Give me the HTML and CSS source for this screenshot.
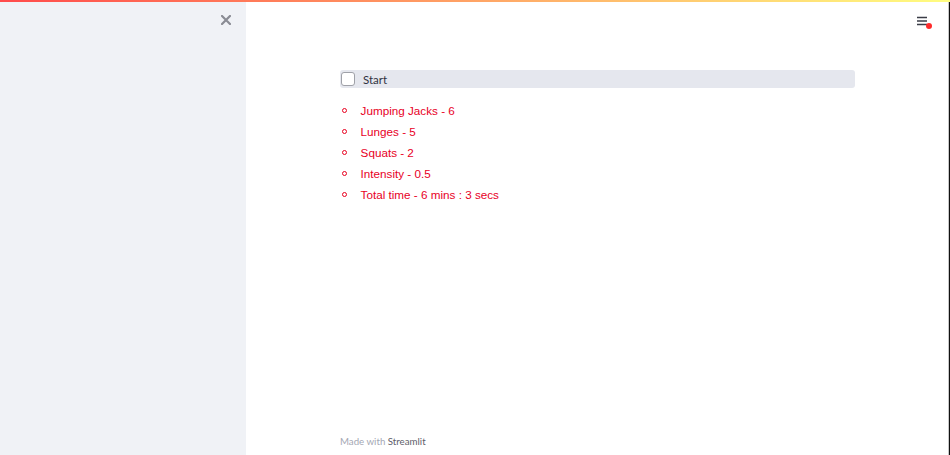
FILE: index.html
```html
<!DOCTYPE html>
<html>
<head>
<meta charset="utf-8">
<link rel="stylesheet" href="styles.css">
</head>
<body>
<div class="decoration"></div>
<div class="app">
  <aside class="sidebar">
    <button class="close" aria-label="Close sidebar">
      <svg width="10" height="10" viewBox="0 0 10 10"><path d="M1 1L9 9M9 1L1 9" stroke="#8a8c94" stroke-width="2.2" stroke-linecap="square"/></svg>
    </button>
  </aside>
  <main class="main">
    <div class="menu">
      <svg width="12" height="10" viewBox="0 0 12 10"><path d="M0 1.5H10M0 5H10M0 8.5H10" stroke="#3b3d47" stroke-width="1.3"/></svg>
      <span class="dot"></span>
    </div>
    <div class="block">
      <label class="checkrow">
        <span class="box"></span>
        <span class="label">Start</span>
      </label>
      <ul class="list">
        <li>Jumping Jacks - 6</li>
        <li>Lunges - 5</li>
        <li>Squats - 2</li>
        <li>Intensity - 0.5</li>
        <li>Total time - 6 mins : 3 secs</li>
      </ul>
    </div>
    <footer class="footer">Made with <span class="brand">Streamlit</span></footer>
  </main>
  <div class="edge"></div>
</div>
</body>
</html>
```
FILE: styles.css
```css
html, body {
  margin: 0;
  padding: 0;
  height: 100%;
  background: #ffffff;
  overflow: hidden;
}
body {
  font-family: "Liberation Sans", Arial, sans-serif;
}
.decoration {
  position: absolute;
  top: 0;
  left: 0;
  right: 0;
  height: 2px;
  background: linear-gradient(90deg, #ff4b4b, #fffd80);
  z-index: 5;
}
.app {
  display: flex;
  height: 455px;
}
.sidebar {
  width: 246px;
  flex: none;
  background: #f0f2f6;
  display: flex;
  justify-content: flex-end;
  align-items: flex-start;
}
.close {
  border: none;
  background: transparent;
  padding: 0;
  margin: 15px 15px 0 0;
  width: 10px;
  height: 10px;
  display: flex;
}
.main {
  flex: 1;
  position: relative;
  display: flex;
  flex-direction: column;
  align-items: center;
}
.menu {
  position: absolute;
  top: 16px;
  right: 16px;
  width: 14px;
  height: 14px;
}
.menu svg { display: block; }
.dot {
  position: absolute;
  left: 9px;
  top: 7px;
  width: 6px;
  height: 6px;
  border-radius: 50%;
  background: #ff2b2b;
}
.block {
  width: 515px;
  margin-top: 70px;
  margin-left: 2px;
  flex: 1;
}
.checkrow {
  display: flex;
  align-items: center;
  height: 18px;
  background: #e5e7ee;
  border-radius: 3px;
}
.box {
  width: 12px;
  height: 12px;
  margin-left: 1px;
  border: 1px solid #9fa1a8;
  border-radius: 3px;
  background: #fff;
  flex: none;
}
.label {
  margin-left: 8px;
  font-family: "Lato", "Open Sans", sans-serif;
  font-size: 11.5px;
  color: #31333f;
}
.list {
  list-style: none;
  margin: 12px 0 0 0;
  padding: 0;
  color: #e8001f;
  font-size: 11.7px;
}
.list li {
  line-height: 21px;
  display: flex;
  align-items: center;
}
.list li::before {
  content: "";
  width: 3px;
  height: 3px;
  border: 1.2px solid #e8001f;
  border-radius: 50%;
  margin-left: 2px;
  margin-right: 13.6px;
  flex: none;
}
.footer {
  width: 515px;
  margin-left: 2px;
  font-family: "Lato", "Open Sans", sans-serif;
  font-size: 9.7px;
  color: #a4a7b3;
  padding-bottom: 8px;
}
.brand {
  color: #5e606a;
}
.edge {
  width: 3px;
  flex: none;
  background: linear-gradient(90deg, #fff 0, #fff 1px, #c8c8c8 1px, #c8c8c8 2px, #111 2px);
}
```
